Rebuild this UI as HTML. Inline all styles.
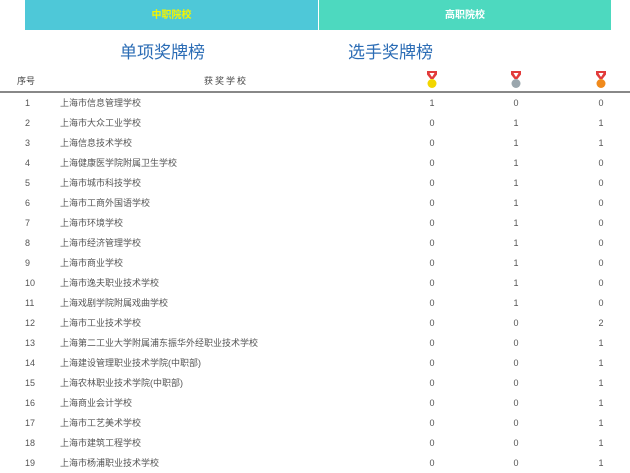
<!DOCTYPE html>
<html><head><meta charset="utf-8"><style>
*{margin:0;padding:0;box-sizing:border-box}
body{width:630px;height:470px;overflow:hidden;background:#fff;font-family:"Liberation Sans","Noto Sans CJK SC",sans-serif;position:relative;color:#555}
.tab{position:absolute;top:0;height:30px;line-height:32px;text-align:center;font-size:10px;font-weight:bold}
.t{position:absolute;top:38px;font-size:17px;color:#2b6cb5}
.hd{position:absolute;top:74px;font-size:9px;color:#444}
.line{position:absolute;left:0;top:91px;width:630px;height:2px;background:#888}
.r{position:absolute;left:0;width:630px;height:20px;font-size:9px;color:#555;line-height:20px}
.r span{position:absolute}
.n{left:25px}.s{left:60px}
.g,.sv,.b{width:20px;text-align:center}
.g{left:422px}.sv{left:506px}.b{left:591px}
.m{position:absolute;top:71px}
</style></head><body>
<div class="tab" style="left:25px;width:293px;background:#4ec8d8;color:#f4f400">中职院校</div>
<div class="tab" style="left:319px;width:292px;background:#4dd9bf;color:#fff">高职院校</div>
<div class="t" style="left:120px">单项奖牌榜</div>
<div class="t" style="left:348px">选手奖牌榜</div>
<div class="hd" style="left:17px">序号</div>
<div class="hd" style="left:204px;letter-spacing:2px">获奖学校</div>
<svg class="m" style="left:426px" width="12" height="18" viewBox="0 0 12 18"><path d="M1 0h10v3.5L7.5 8h-3L1 3.5z" fill="#e23b3b"/><path d="M3.5 2h5L6.5 5.5h-1z" fill="#fff"/><circle cx="6" cy="12.5" r="4.5" fill="#f2d600"/></svg>
<svg class="m" style="left:510px" width="12" height="18" viewBox="0 0 12 18"><path d="M1 0h10v3.5L7.5 8h-3L1 3.5z" fill="#e23b3b"/><path d="M3.5 2h5L6.5 5.5h-1z" fill="#fff"/><circle cx="6" cy="12.5" r="4.5" fill="#9aa6ad"/></svg>
<svg class="m" style="left:595px" width="12" height="18" viewBox="0 0 12 18"><path d="M1 0h10v3.5L7.5 8h-3L1 3.5z" fill="#e23b3b"/><path d="M3.5 2h5L6.5 5.5h-1z" fill="#fff"/><circle cx="6" cy="12.5" r="4.5" fill="#f08a1c"/></svg>
<div class="line"></div>
<div class="r" style="top:93px"><span class="n">1</span><span class="s">上海市信息管理学校</span><span class="g">1</span><span class="sv">0</span><span class="b">0</span></div>
<div class="r" style="top:113px"><span class="n">2</span><span class="s">上海市大众工业学校</span><span class="g">0</span><span class="sv">1</span><span class="b">1</span></div>
<div class="r" style="top:133px"><span class="n">3</span><span class="s">上海信息技术学校</span><span class="g">0</span><span class="sv">1</span><span class="b">1</span></div>
<div class="r" style="top:153px"><span class="n">4</span><span class="s">上海健康医学院附属卫生学校</span><span class="g">0</span><span class="sv">1</span><span class="b">0</span></div>
<div class="r" style="top:173px"><span class="n">5</span><span class="s">上海市城市科技学校</span><span class="g">0</span><span class="sv">1</span><span class="b">0</span></div>
<div class="r" style="top:193px"><span class="n">6</span><span class="s">上海市工商外国语学校</span><span class="g">0</span><span class="sv">1</span><span class="b">0</span></div>
<div class="r" style="top:213px"><span class="n">7</span><span class="s">上海市环境学校</span><span class="g">0</span><span class="sv">1</span><span class="b">0</span></div>
<div class="r" style="top:233px"><span class="n">8</span><span class="s">上海市经济管理学校</span><span class="g">0</span><span class="sv">1</span><span class="b">0</span></div>
<div class="r" style="top:253px"><span class="n">9</span><span class="s">上海市商业学校</span><span class="g">0</span><span class="sv">1</span><span class="b">0</span></div>
<div class="r" style="top:273px"><span class="n">10</span><span class="s">上海市逸夫职业技术学校</span><span class="g">0</span><span class="sv">1</span><span class="b">0</span></div>
<div class="r" style="top:293px"><span class="n">11</span><span class="s">上海戏剧学院附属戏曲学校</span><span class="g">0</span><span class="sv">1</span><span class="b">0</span></div>
<div class="r" style="top:313px"><span class="n">12</span><span class="s">上海市工业技术学校</span><span class="g">0</span><span class="sv">0</span><span class="b">2</span></div>
<div class="r" style="top:333px"><span class="n">13</span><span class="s">上海第二工业大学附属浦东振华外经职业技术学校</span><span class="g">0</span><span class="sv">0</span><span class="b">1</span></div>
<div class="r" style="top:353px"><span class="n">14</span><span class="s">上海建设管理职业技术学院(中职部)</span><span class="g">0</span><span class="sv">0</span><span class="b">1</span></div>
<div class="r" style="top:373px"><span class="n">15</span><span class="s">上海农林职业技术学院(中职部)</span><span class="g">0</span><span class="sv">0</span><span class="b">1</span></div>
<div class="r" style="top:393px"><span class="n">16</span><span class="s">上海商业会计学校</span><span class="g">0</span><span class="sv">0</span><span class="b">1</span></div>
<div class="r" style="top:413px"><span class="n">17</span><span class="s">上海市工艺美术学校</span><span class="g">0</span><span class="sv">0</span><span class="b">1</span></div>
<div class="r" style="top:433px"><span class="n">18</span><span class="s">上海市建筑工程学校</span><span class="g">0</span><span class="sv">0</span><span class="b">1</span></div>
<div class="r" style="top:453px"><span class="n">19</span><span class="s">上海市杨浦职业技术学校</span><span class="g">0</span><span class="sv">0</span><span class="b">1</span></div>
</body></html>
